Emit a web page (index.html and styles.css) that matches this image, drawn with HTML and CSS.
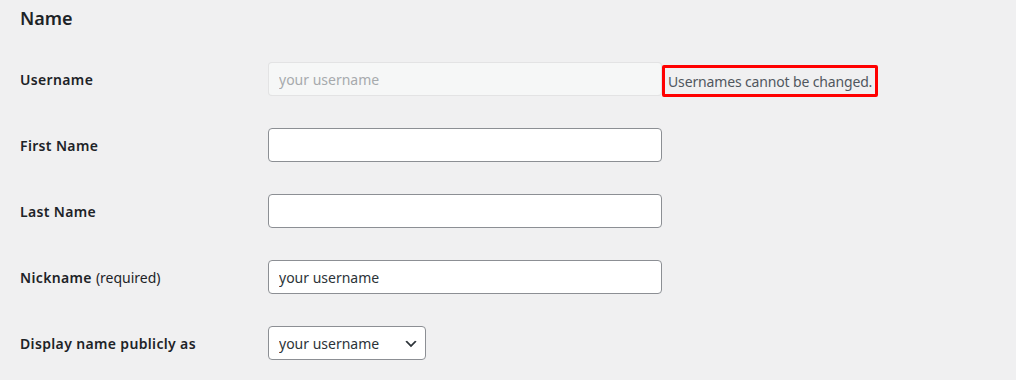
FILE: index.html
```html
<!DOCTYPE html>
<html>
<head>
  <title>Profile</title>
  <link rel="stylesheet" href="styles.css">
</head>
<body>
<div class="wrap">
  <h2>Name</h2>

  <div class="form-table">
    <div class="row">
      <label for="user_login">Username</label>
      <div class="field">
        <input type="text" id="user_login" class="regular-text" placeholder="your username" disabled>
        <span class="description">Usernames cannot be changed.</span>
      </div>
    </div>

    <div class="row">
      <label for="first_name">First Name</label>
      <div class="field">
        <input type="text" id="first_name" class="regular-text">
      </div>
    </div>

    <div class="row">
      <label for="last_name">Last Name</label>
      <div class="field">
        <input type="text" id="last_name" class="regular-text">
      </div>
    </div>

    <div class="row">
      <label for="nickname">Nickname <span class="req">(required)</span></label>
      <div class="field">
        <input type="text" id="nickname" class="regular-text" value="your username">
      </div>
    </div>

    <div class="row">
      <label for="display_name">Display name publicly as</label>
      <div class="field">
        <select id="display_name">
          <option>your username</option>
        </select>
      </div>
    </div>
  </div>
</div>
</body>
</html>
```

FILE: styles.css
```css
/* profile screen */
body {
  margin: 0;
  background-color: #f0f0f1;
  color: #1d2327;
  font-family: "Noto Sans", "Open Sans", sans-serif;
  font-size: 14px;
}

.wrap {
  padding: 0 20px;
}

h2 {
  margin: 7px 0 17px;
  font-size: 18px;
  line-height: 22px;
  font-weight: 600;
}

.row {
  display: grid;
  grid-template-columns: 248px 1fr;
  align-items: center;
  padding: 16px 0;
}

.row label {
  font-weight: 600;
  letter-spacing: 0.35px;
}

.row label .req {
  font-weight: 400;
  letter-spacing: 0;
}

.field {
  display: flex;
  align-items: flex-start;
  height: 34px;
}

input[type="text"], select {
  box-sizing: border-box;
  height: 34px;
  margin: 0;
  padding: 0 10px;
  border: 1px solid #8c8f94;
  border-radius: 4px;
  background-color: #fff;
  color: #2c3338;
  font-family: inherit;
  font-size: 14px;
}

.regular-text {
  width: 394px;
}

input[disabled] {
  background-color: #f6f7f7;
  border-color: rgba(220, 220, 222, 0.75);
}

input[disabled]::placeholder {
  color: #a7aaad;
}

.description {
  box-sizing: border-box;
  height: 32px;
  margin-top: 3px;
  padding: 0 3px;
  display: flex;
  align-items: center;
  border: 3px solid #ff0000;
  border-radius: 2px;
  color: #50575e;
  letter-spacing: -0.15px;
}

select {
  width: 158px;
  padding-right: 24px;
  -webkit-appearance: none;
  appearance: none;
  background-image: url("data:image/svg+xml;charset=US-ASCII,%3Csvg%20width%3D%2220%22%20height%3D%2220%22%20xmlns%3D%22http%3A%2F%2Fwww.w3.org%2F2000%2Fsvg%22%3E%3Cpath%20d%3D%22M5%206l5%205%205-5%202%201-7%207-7-7%202-1z%22%20fill%3D%22%232c3338%22%2F%3E%3C%2Fsvg%3E");
  background-repeat: no-repeat;
  background-position: right 6px top 55%;
  background-size: 16px 16px;
}
```
